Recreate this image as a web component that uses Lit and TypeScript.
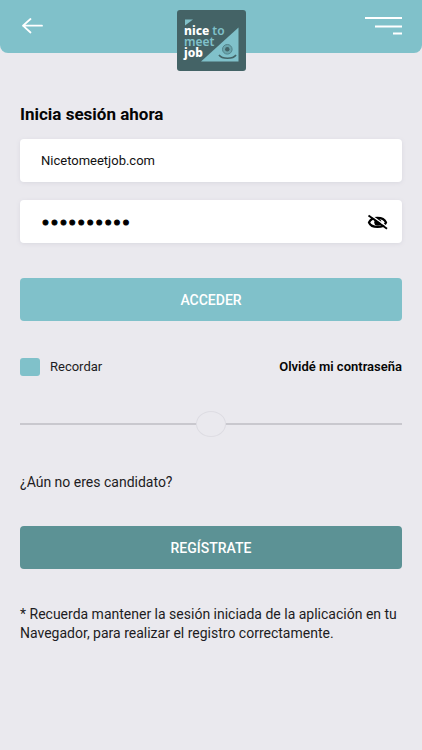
import { LitElement, html, css } from "lit";
import { customElement, state } from "lit/decorators.js";

@customElement("brand-logo")
class BrandLogo extends LitElement {
  static styles = css`
    :host {
      display: block;
      width: 69px;
      height: 61px;
      border-radius: 3px;
      background: #446366;
      overflow: hidden;
    }
    svg {
      display: block;
    }
    text {
      font: 800 12px "Noto Sans", "Open Sans", sans-serif;
    }
    .light {
      fill: #ffffff;
    }
    .teal {
      fill: #80c1ca;
    }
    .soft {
      font-weight: 600;
    }
  `;

  render() {
    return html`
      <svg width="69" height="61" viewBox="0 0 69 61" role="img" aria-label="nice to meet job">
        <path class="teal" d="M8 9.500h8l-8 6z" />
        <path class="teal" d="M61.500 17.500V51.500H24z" />
        <circle cx="50.300" cy="39.300" r="4.800" fill="#6ba5ac" stroke="#52838a" stroke-width="1" />
        <circle cx="50.300" cy="39.300" r="2.200" fill="#436467" />
        <path d="M42 45c3 4.300 14 4.300 17 0" fill="none" stroke="#436467" stroke-width="1.700" />
        <text x="7" y="25"><tspan class="light">nice</tspan><tspan class="teal soft"> to</tspan></text>
        <text class="teal soft" x="7" y="36">meet</text>
        <text class="light" x="7" y="47">job</text>
      </svg>
    `;
  }
}

@customElement("app-root")
class AppRoot extends LitElement {
  @state() private concealed = true;

  static styles = css`
    :host {
      display: block;
      min-height: 100vh;
      background: #eae9ee;
      color: #1d1c22;
      font: 14px/20px Roboto, "Liberation Sans", sans-serif;
    }
    * {
      box-sizing: border-box;
    }
    button,
    input {
      font: inherit;
      color: inherit;
      border: 0;
      margin: 0;
    }
    button {
      cursor: pointer;
    }
    header {
      display: grid;
      grid-template-columns: 1fr auto 1fr;
      align-items: start;
      height: 53px;
      padding: 10px 20px 0;
      border-radius: 0 0 8px 8px;
      background: #80c1ca;
    }
    .icon {
      display: block;
      padding: 0;
      background: none;
    }
    .icon svg {
      display: block;
    }
    .menu {
      justify-self: end;
    }
    main,
    form {
      display: flex;
      flex-direction: column;
    }
    main {
      padding: 49px 20px 24px;
    }
    h1 {
      margin: 0 0 13px;
      font-size: 17px;
      line-height: 24px;
      font-weight: 700;
      color: #050505;
    }
    .field {
      display: flex;
      align-items: center;
      height: 43px;
      margin-bottom: 18px;
      padding: 0 14px 0 21px;
      border-radius: 4px;
      background: #ffffff;
      box-shadow: 0 1px 4px #d9d8df;
    }
    .field input {
      flex: 1;
      min-width: 0;
      padding: 0;
      background: none;
      outline: none;
      font-size: 13px;
      color: #111111;
    }
    .field input[type="password"] {
      padding-top: 3px;
      font-family: "DejaVu Sans", sans-serif;
      font-size: 14px;
      font-weight: 700;
      color: #000000;
      -webkit-text-stroke: 1px #000000;
    }
    .action {
      height: 43px;
      border-radius: 4px;
      color: #ffffff;
      font-weight: 500;
      text-align: center;
    }
    .enter {
      margin-top: 17px;
      background: #80c1ca;
    }
    .register {
      margin-top: 34px;
      background: #5c9295;
    }
    .options {
      display: flex;
      align-items: center;
      justify-content: space-between;
      margin-top: 36px;
      font-size: 13px;
    }
    .remember {
      display: flex;
      align-items: center;
      gap: 10px;
    }
    .remember input {
      appearance: none;
      width: 20px;
      height: 18px;
      border-radius: 3px;
      background: #80c1ca;
    }
    .options a {
      color: #050505;
      font-weight: 600;
      text-decoration: none;
    }
    .divider {
      display: flex;
      align-items: center;
      margin: 34px 0 35px;
    }
    .divider::before,
    .divider::after {
      content: "";
      flex: 1;
      height: 2px;
      background: #c9c8ce;
    }
    .divider span {
      width: 30px;
      height: 26px;
      border: 1px solid #dddce2;
      border-radius: 50%;
    }
    p {
      margin: 0;
    }
    .note {
      margin-top: 36px;
      line-height: 19px;
    }
  `;

  render() {
    return html`
      <header>
        <button class="icon" aria-label="Volver">
          <svg width="24" height="32" viewBox="0 0 24 32" fill="none" stroke="#ffffff" stroke-width="1.800" stroke-linecap="round" stroke-linejoin="round">
            <path d="M22 15.700H3M10.500 9L3 15.700L10.500 22.500" />
          </svg>
        </button>
        <brand-logo></brand-logo>
        <button class="icon menu" aria-label="Menú">
          <svg width="37" height="32" viewBox="0 0 37 32" fill="#ffffff">
            <path d="M0 7h37v2H0zM10 15.500h27v2H10zM28 22.500h9v2h-9z" />
          </svg>
        </button>
      </header>
      <main>
        <form @submit=${(e: Event) => e.preventDefault()}>
          <h1>Inicia sesión ahora</h1>
          <div class="field">
            <input type="text" aria-label="Usuario" value="Nicetomeetjob.com" />
          </div>
          <div class="field">
            <input type=${this.concealed ? "password" : "text"} aria-label="Contraseña" value="contrasena" />
            <button class="icon" type="button" aria-label="Mostrar contraseña" @click=${() => (this.concealed = !this.concealed)}>
              <svg width="21" height="16" viewBox="0 0 21 16" fill="none" stroke="#000000">
                <path d="M2 8.500C4.500 2.200 16.500 2.200 19 8.500C16.500 14.500 4.500 14.500 2 8.500Z" stroke-width="2.200" />
                <circle cx="10.800" cy="8.300" r="3.500" fill="#000000" stroke="none" />
                <path d="M3 .600L20.500 13" stroke="#ffffff" stroke-width="1.500" />
                <path d="M1.500 1.500L20 14.700" stroke-width="1.900" />
              </svg>
            </button>
          </div>
          <button class="action enter">ACCEDER</button>
          <div class="options">
            <label class="remember"><input type="checkbox" checked />Recordar</label>
            <a href="#">Olvidé mi contraseña</a>
          </div>
        </form>
        <div class="divider"><span></span></div>
        <p>¿Aún no eres candidato?</p>
        <button class="action register">REGÍSTRATE</button>
        <p class="note">
          * Recuerda mantener la sesión iniciada de la aplicación en tu Navegador, para realizar el registro correctamente.
        </p>
      </main>
    `;
  }
}
